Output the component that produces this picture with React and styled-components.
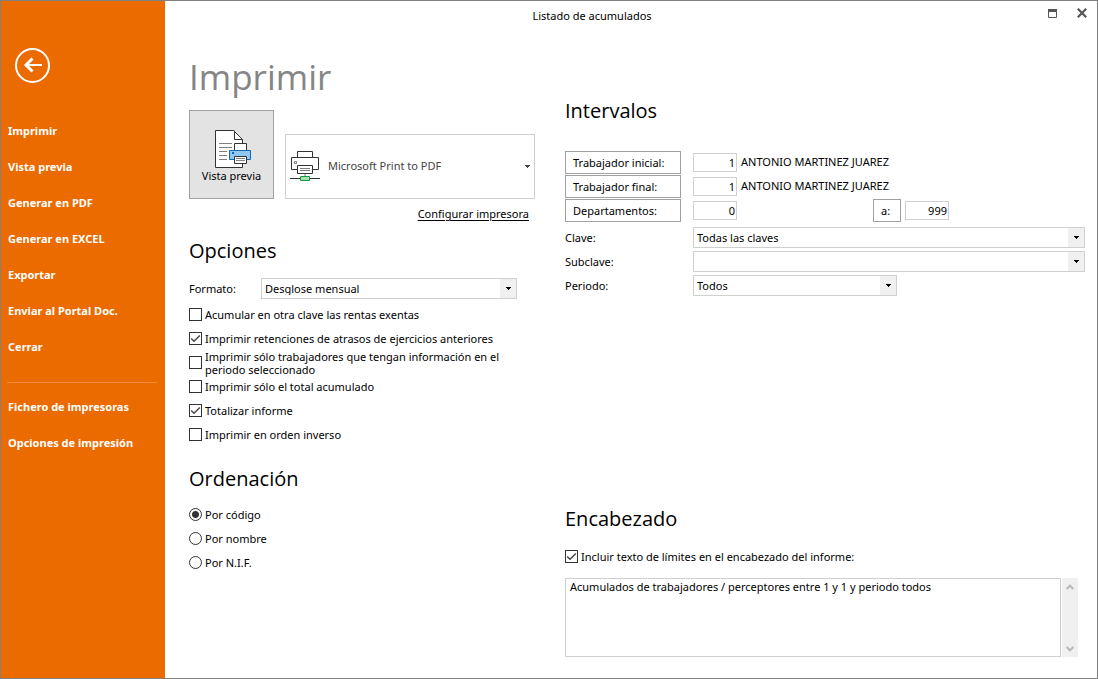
import React from 'react'
import styled, { createGlobalStyle } from 'styled-components'

const GlobalStyle = createGlobalStyle`
  * {
    box-sizing: border-box;
  }

  body {
    margin: 0;
    background: #fff;
    color: #000;
    font-family: 'Noto Sans', 'Open Sans', sans-serif;
    font-size: 11px;
    line-height: 13px;
  }

  button,
  input,
  select,
  textarea {
    margin: 0;
    color: inherit;
    font: inherit;
  }
`

const Window = styled.div`
  display: flex;
  min-height: 100vh;
  border: 1px solid #808080;
`

const Sidebar = styled.nav`
  display: flex;
  flex-direction: column;
  flex: 0 0 164px;
  background: #eb6b00;
  color: #fff;
`

const BackButton = styled.button`
  width: 35px;
  height: 35px;
  margin: 47px 0 29px 14px;
  padding: 0;
  border: 0;
  background: none;

  svg {
    display: block;
  }
`

const SidebarItem = styled.button`
  height: 36px;
  padding: 0 7px;
  border: 0;
  background: none;
  font-size: 11px;
  font-weight: 700;
  text-align: left;
  white-space: nowrap;
`

const SidebarDivider = styled.hr`
  width: 150px;
  height: 1px;
  margin: 18px 0 5px 6px;
  border: 0;
  background: #f08c3c;
`

const Main = styled.main`
  display: flex;
  flex: 1;
  flex-direction: column;
  min-width: 0;
`

const TitleBar = styled.header`
  display: flex;
  height: 30px;
`

const Title = styled.div`
  flex: 1;
  line-height: 30px;
  text-align: center;
`

const WindowButtons = styled.div`
  display: flex;
  justify-content: flex-end;
  gap: 2px;
  width: 78px;
  padding: 0 1px;
`

const WindowButton = styled.button`
  display: flex;
  align-items: center;
  justify-content: center;
  width: 28px;
  height: 24px;
  padding: 0;
  border: 0;
  background: none;
`

const Content = styled.div`
  display: grid;
  flex: 1;
  grid-template-columns: 346px minmax(0, 1fr);
  gap: 30px;
  padding: 0 12px 21px 24px;
`

const LeftColumn = styled.div`
  padding-top: 22px;
`

const RightColumn = styled.div`
  display: flex;
  flex-direction: column;
  padding-top: 66px;
`

const PageTitle = styled.h1`
  margin: 0 0 9px;
  color: #858585;
  font-family: 'Open Sans', 'Noto Sans', sans-serif;
  font-size: 35px;
  font-weight: 400;
  line-height: 48px;
`

const SectionTitle = styled.h2`
  margin: 0 0 ${(props) => props.$gap || 10}px;
  font-family: 'Open Sans', 'Noto Sans', sans-serif;
  font-size: 20px;
  font-weight: 400;
  line-height: 28px;
`

const PrintRow = styled.div`
  display: flex;
  align-items: flex-end;
  gap: 11px;
`

const PreviewButton = styled.button`
  display: flex;
  flex-direction: column;
  align-items: center;
  width: 85px;
  height: 89px;
  padding: 19px 0 0;
  border: 1px solid #a0a0a0;
  background: #e3e3e3;
  line-height: 15px;
`

const SelectBox = styled.span`
  position: relative;
  display: block;
  flex: ${(props) => (props.$width ? `0 0 ${props.$width}px` : '1')};
  height: ${(props) => (props.$large ? 65 : 21)}px;
  border: 1px solid #d0d0d0;

  select {
    width: 100%;
    height: 100%;
    padding: ${(props) => (props.$large ? '0 20px 2px 42px' : '0 20px 0 3px')};
    border: 0;
    border-radius: 0;
    outline: 0;
    appearance: none;
    background: #fff;
    color: ${(props) => (props.$large ? '#444' : '#000')};
  }
`

const SelectArrow = styled.span`
  position: absolute;
  top: 0;
  right: 0;
  bottom: 0;
  display: flex;
  align-items: center;
  justify-content: center;
  width: ${(props) => (props.$plain ? 14 : 16)}px;
  background: ${(props) => (props.$plain ? 'none' : '#f0f0f0')};
  color: ${(props) => (props.$plain ? '#444' : '#000')};
  pointer-events: none;
`

const PrinterMark = styled.span`
  position: absolute;
  top: 16px;
  left: 4px;
  pointer-events: none;

  svg {
    display: block;
  }
`

const ConfigRow = styled.div`
  display: flex;
  justify-content: flex-end;
  height: 38px;
  padding: 6px 6px 0 0;
`

const ConfigLink = styled.a`
  color: #000;
  line-height: 18px;
  text-underline-offset: 2px;
`

const FormatRow = styled.div`
  display: flex;
  align-items: center;
  height: 28px;
  padding: 0 18px 1px 0;

  label {
    width: 72px;
  }
`

const OptionList = styled.div`
  margin-bottom: 18px;
`

const Option = styled.label`
  display: flex;
  align-items: center;
  gap: 3px;
  height: 24px;
  padding-bottom: 1px;

  input {
    flex: none;
    width: 13px;
    height: 13px;
    border: 1px solid #333;
    border-radius: ${(props) => (props.$round ? '50%' : 0)};
    appearance: none;
    background: #fff center / 11px 11px no-repeat;
  }

  input[type='checkbox']:checked {
    background-image: url("data:image/svg+xml,%3Csvg xmlns='http://www.w3.org/2000/svg' viewBox='0 0 11 11'%3E%3Cpath d='M1.2 5.5 4 8.3 9.8 2.5' fill='none' stroke='%23444' stroke-width='1.4'/%3E%3C/svg%3E");
  }

  input[type='radio']:checked {
    background-image: radial-gradient(circle, #333 3px, transparent 4px);
  }

  span {
    max-width: 310px;
  }
`

const FieldRow = styled.div`
  display: flex;
  align-items: center;
  height: 24px;
  padding-bottom: 1px;

  label {
    flex: 0 0 128px;
  }
`

const FieldGroup = styled.div`
  margin-bottom: 3px;
`

const FieldButton = styled.button`
  width: ${(props) => (props.$small ? 28 : 116)}px;
  height: 23px;
  margin-right: ${(props) => (props.$small ? 4 : 12)}px;
  padding: 0 7px;
  border: 1px solid #a0a0a0;
  background: #fff;
  text-align: left;
`

const NumberInput = styled.input`
  width: 44px;
  height: 19px;
  padding: 0 1px 1px;
  border: 1px solid #d0d0d0;
  border-radius: 0;
  outline: 0;
  text-align: right;
`

const WorkerName = styled.span`
  margin-left: 4px;
  padding-bottom: 2px;
`

const RangeEnd = styled.div`
  display: flex;
  align-items: center;
  margin-left: 136px;
`

const HeadingSection = styled.section`
  margin-top: auto;
`

const TextRow = styled.div`
  display: flex;
  gap: 1px;
  height: 79px;
  margin-top: 9px;
  padding-right: 7px;
`

const HeadingText = styled.textarea`
  flex: 1;
  min-width: 0;
  padding: 1px 4px;
  border: 1px solid #d0d0d0;
  border-radius: 0;
  outline: 0;
  overflow: hidden;
  resize: none;
`

const ScrollTrack = styled.div`
  display: flex;
  flex-direction: column;
  justify-content: space-between;
  width: 16px;
  background: #f0f0f0;
`

const ScrollButton = styled.button`
  display: flex;
  align-items: center;
  justify-content: center;
  height: 17px;
  padding: 0;
  border: 0;
  background: none;
`

const BackIcon = () => (
  <svg width="35" height="35" viewBox="0 0 35 35" fill="none" stroke="#fff">
    <circle cx="17.5" cy="17.5" r="16.5" strokeWidth="2" />
    <path d="M10 17h17" strokeWidth="2" />
    <path d="M17.5 10.5 11 17l6.500 6.500" strokeWidth="3" />
  </svg>
)

const MaximizeIcon = () => (
  <svg width="9" height="9" viewBox="0 0 9 9">
    <path d="M.5 .5h8v8h-8z" fill="#fff" stroke="#555" />
    <path d="M0 0h9v3H0z" fill="#555" />
  </svg>
)

const CloseIcon = () => (
  <svg width="10" height="10" viewBox="0 0 10 10">
    <path d="m.8.8 8.4 8.4M9.2.8.8 9.2" stroke="#555" strokeWidth="2.2" />
  </svg>
)

const ArrowIcon = () => (
  <svg width="5" height="3" viewBox="0 0 5 3" shapeRendering="crispEdges">
    <path d="M0 0h5v1H4v1H3v1H2V2H1V1H0z" fill="currentColor" />
  </svg>
)

const ChevronIcon = ({ down }) => (
  <svg width="8" height="6" viewBox="0 0 8 6" fill="none">
    <path
      d={down ? 'M.7 1 4 4.3 7.3 1' : 'M.7 5 4 1.7 7.3 5'}
      stroke="#b8b8b8"
      strokeWidth="2"
    />
  </svg>
)

const PreviewIcon = () => (
  <svg width="40" height="38" viewBox="-3 0 40 38" fill="none">
    <path d="M.5.5h18l9 9v28H.5z" fill="#fff" stroke="#333" />
    <path d="M19.5.5v9h8" stroke="#333" />
    <path
      d="M4 13.5h13M4 17.5h13M4 21.5h8M4 25.5h8M4 29.5h8"
      stroke="#808080"
    />
    <path d="M19.5 13.5h12v7h-12z" fill="#fff" stroke="#333" />
    <path d="M14.5 20.5h21v9h-21z" fill="#92c8f0" stroke="#0d68b8" />
    <path d="M17 22h2v2h-2z" fill="#0d68b8" />
    <path d="M19.5 26.5h12v7h-12z" fill="#fff" stroke="#333" />
    <path d="M21 28.5h9M21 30.5h9" stroke="#808080" />
  </svg>
)

const PrinterIcon = () => (
  <svg width="30" height="30" viewBox="0 0 30 30" fill="none">
    <path d="M7.5.5h15v6h-15z" fill="#fff" stroke="#333" />
    <path d="M1.5 6.5h27v12h-27z" fill="#fff" stroke="#333" />
    <path d="M4.5 10.5h2v2h-2z" stroke="#808080" />
    <path d="M7.5 14.5h15v8h-15z" fill="#fff" stroke="#333" />
    <path d="M10 17.5h10M10 19.5h10" stroke="#808080" />
    <path d="M15 23v2" stroke="#808080" />
    <path d="M0 27.5h10M20 27.5h10" stroke="#333" />
    <path d="M10.5 25.5h9v4h-9z" fill="#a6e0b4" stroke="#149a3e" />
  </svg>
)

const Select = ({ id, width, options }) => (
  <SelectBox $width={width}>
    <select id={id}>
      {options.map((option) => (
        <option key={option}>{option}</option>
      ))}
    </select>
    <SelectArrow>
      <ArrowIcon />
    </SelectArrow>
  </SelectBox>
)

const actions = [
  'Imprimir',
  'Vista previa',
  'Generar en PDF',
  'Generar en EXCEL',
  'Exportar',
  'Enviar al Portal Doc.',
  'Cerrar',
]

const settings = ['Fichero de impresoras', 'Opciones de impresión']

const options = [
  { text: 'Acumular en otra clave las rentas exentas' },
  {
    text: 'Imprimir retenciones de atrasos de ejercicios anteriores',
    checked: true,
  },
  {
    text:
      'Imprimir sólo trabajadores que tengan información en el periodo seleccionado',
  },
  { text: 'Imprimir sólo el total acumulado' },
  { text: 'Totalizar informe', checked: true },
  { text: 'Imprimir en orden inverso' },
]

const orders = ['Por código', 'Por nombre', 'Por N.I.F.']

const App = () => (
  <>
    <GlobalStyle />
    <Window>
      <Sidebar>
        <BackButton aria-label="Volver">
          <BackIcon />
        </BackButton>
        {actions.map((action) => (
          <SidebarItem key={action}>{action}</SidebarItem>
        ))}
        <SidebarDivider />
        {settings.map((setting) => (
          <SidebarItem key={setting}>{setting}</SidebarItem>
        ))}
      </Sidebar>
      <Main>
        <TitleBar>
          <Title>Listado de acumulados</Title>
          <WindowButtons>
            <WindowButton aria-label="Maximizar">
              <MaximizeIcon />
            </WindowButton>
            <WindowButton aria-label="Cerrar ventana">
              <CloseIcon />
            </WindowButton>
          </WindowButtons>
        </TitleBar>
        <Content>
          <LeftColumn>
            <PageTitle>Imprimir</PageTitle>
            <PrintRow>
              <PreviewButton>
                <PreviewIcon />
                Vista previa
              </PreviewButton>
              <SelectBox $large>
                <select aria-label="Impresora">
                  <option>Microsoft Print to PDF</option>
                </select>
                <PrinterMark>
                  <PrinterIcon />
                </PrinterMark>
                <SelectArrow $plain>
                  <ArrowIcon />
                </SelectArrow>
              </SelectBox>
            </PrintRow>
            <ConfigRow>
              <ConfigLink href="#configurar">Configurar impresora</ConfigLink>
            </ConfigRow>
            <SectionTitle>Opciones</SectionTitle>
            <FormatRow>
              <label htmlFor="formato">Formato:</label>
              <Select id="formato" options={['Desglose mensual']} />
            </FormatRow>
            <OptionList>
              {options.map(({ text, checked }) => (
                <Option key={text}>
                  <input type="checkbox" defaultChecked={checked} />
                  <span>{text}</span>
                </Option>
              ))}
            </OptionList>
            <SectionTitle>Ordenación</SectionTitle>
            {orders.map((order, index) => (
              <Option key={order} $round>
                <input type="radio" name="orden" defaultChecked={index === 0} />
                <span>{order}</span>
              </Option>
            ))}
          </LeftColumn>
          <RightColumn>
            <SectionTitle $gap={26}>Intervalos</SectionTitle>
            <FieldGroup>
              <FieldRow>
                <FieldButton>Trabajador inicial:</FieldButton>
                <NumberInput aria-label="Trabajador inicial" defaultValue="1" />
                <WorkerName>ANTONIO MARTINEZ JUAREZ</WorkerName>
              </FieldRow>
              <FieldRow>
                <FieldButton>Trabajador final:</FieldButton>
                <NumberInput aria-label="Trabajador final" defaultValue="1" />
                <WorkerName>ANTONIO MARTINEZ JUAREZ</WorkerName>
              </FieldRow>
              <FieldRow>
                <FieldButton>Departamentos:</FieldButton>
                <NumberInput aria-label="Departamento desde" defaultValue="0" />
                <RangeEnd>
                  <FieldButton $small>a:</FieldButton>
                  <NumberInput
                    aria-label="Departamento hasta"
                    defaultValue="999"
                  />
                </RangeEnd>
              </FieldRow>
            </FieldGroup>
            <FieldRow>
              <label htmlFor="clave">Clave:</label>
              <Select id="clave" options={['Todas las claves']} />
            </FieldRow>
            <FieldRow>
              <label htmlFor="subclave">Subclave:</label>
              <Select id="subclave" options={['']} />
            </FieldRow>
            <FieldRow>
              <label htmlFor="periodo">Periodo:</label>
              <Select id="periodo" width={204} options={['Todos']} />
            </FieldRow>
            <HeadingSection>
              <SectionTitle $gap={12}>Encabezado</SectionTitle>
              <Option>
                <input type="checkbox" defaultChecked />
                <span>Incluir texto de límites en el encabezado del informe:</span>
              </Option>
              <TextRow>
                <HeadingText
                  aria-label="Texto del encabezado"
                  defaultValue="Acumulados de trabajadores / perceptores entre 1 y 1 y periodo todos"
                />
                <ScrollTrack>
                  <ScrollButton aria-label="Subir">
                    <ChevronIcon />
                  </ScrollButton>
                  <ScrollButton aria-label="Bajar">
                    <ChevronIcon down />
                  </ScrollButton>
                </ScrollTrack>
              </TextRow>
            </HeadingSection>
          </RightColumn>
        </Content>
      </Main>
    </Window>
  </>
)

export default App
